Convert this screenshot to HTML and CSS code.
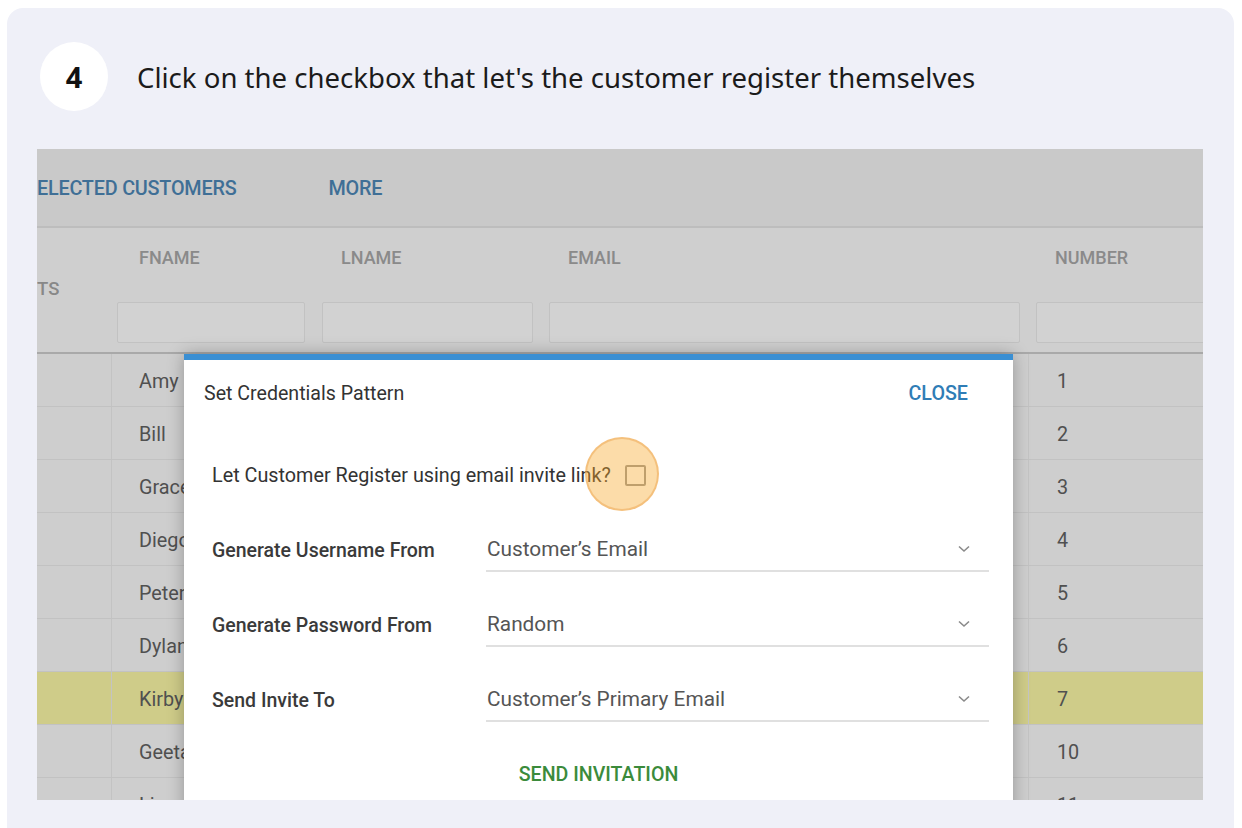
FILE: index.html
```html
<!DOCTYPE html>
<html>
<head>
<meta charset="utf-8">
<link rel="stylesheet" href="styles.css">
</head>
<body>
<div class="card">
  <div class="step">
    <div class="badge">4</div>
    <div class="title">Click on the checkbox that let's the customer register themselves</div>
  </div>
  <div class="shot">
    <div class="toolbar">
      <span class="tb-link">ELECTED CUSTOMERS</span>
      <span class="tb-link">MORE</span>
    </div>
    <div class="thead">
      <div class="hcell c0"><span class="ts">TS</span></div>
      <div class="hcell c1"><div class="hlabel">FNAME</div><div class="filter"></div></div>
      <div class="hcell c2"><div class="hlabel">LNAME</div><div class="filter"></div></div>
      <div class="hcell c3"><div class="hlabel">EMAIL</div><div class="filter"></div></div>
      <div class="hcell c4"><div class="hlabel">NUMBER</div><div class="filter"></div></div>
    </div>
    <div class="rows">
      <div class="row"><div class="cell c0"></div><div class="cell">Amy</div><div class="cell"></div><div class="cell"></div><div class="cell c4">1</div></div>
      <div class="row"><div class="cell c0"></div><div class="cell">Bill</div><div class="cell"></div><div class="cell"></div><div class="cell c4">2</div></div>
      <div class="row"><div class="cell c0"></div><div class="cell">Grace</div><div class="cell"></div><div class="cell"></div><div class="cell c4">3</div></div>
      <div class="row"><div class="cell c0"></div><div class="cell">Diego</div><div class="cell"></div><div class="cell"></div><div class="cell c4">4</div></div>
      <div class="row"><div class="cell c0"></div><div class="cell">Peter</div><div class="cell"></div><div class="cell"></div><div class="cell c4">5</div></div>
      <div class="row"><div class="cell c0"></div><div class="cell">Dylan</div><div class="cell"></div><div class="cell"></div><div class="cell c4">6</div></div>
      <div class="row hl"><div class="cell c0"></div><div class="cell">Kirby</div><div class="cell"></div><div class="cell"></div><div class="cell c4">7</div></div>
      <div class="row"><div class="cell c0"></div><div class="cell">Geeta</div><div class="cell"></div><div class="cell"></div><div class="cell c4">10</div></div>
      <div class="row"><div class="cell c0"></div><div class="cell">Lisa</div><div class="cell"></div><div class="cell"></div><div class="cell c4">11</div></div>
    </div>

    <div class="dialog">
      <div class="dlg-head">
        <span class="dlg-title">Set Credentials Pattern</span>
        <span class="dlg-close">CLOSE</span>
      </div>
      <div class="check-row">
        <span class="check-label">Let Customer Register using email invite link?</span>
        <span class="checkbox"></span>
      </div>
      <div class="form-row">
        <div class="f-label">Generate Username From</div>
        <div class="select"><span>Customer’s Email</span>
          <svg class="chev" width="12" height="8" viewBox="0 0 12 8"><polyline points="1,1.5 6,6 11,1.5" fill="none" stroke="#8a8a8a" stroke-width="1.6"/></svg>
        </div>
      </div>
      <div class="form-row">
        <div class="f-label">Generate Password From</div>
        <div class="select"><span>Random</span>
          <svg class="chev" width="12" height="8" viewBox="0 0 12 8"><polyline points="1,1.5 6,6 11,1.5" fill="none" stroke="#8a8a8a" stroke-width="1.6"/></svg>
        </div>
      </div>
      <div class="form-row">
        <div class="f-label">Send Invite To</div>
        <div class="select"><span>Customer’s Primary Email</span>
          <svg class="chev" width="12" height="8" viewBox="0 0 12 8"><polyline points="1,1.5 6,6 11,1.5" fill="none" stroke="#8a8a8a" stroke-width="1.6"/></svg>
        </div>
      </div>
      <div class="send">SEND INVITATION</div>
    </div>

    <div class="spot"></div>
  </div>
</div>
</body>
</html>
```

FILE: styles.css
```css
html, body {
  margin: 0;
  padding: 0;
  background: #ffffff;
  overflow: hidden;
  font-family: Roboto, "Liberation Sans", sans-serif;
}

.card {
  margin: 8px 8px 0 7px;
  height: 840px;
  box-sizing: border-box;
  background: #eff0f8;
  border-radius: 16px 16px 0 0;
  padding: 34px 31px 0 30px;
}

.step {
  display: flex;
  align-items: center;
  gap: 29px;
  padding-left: 3px;
}

.badge {
  width: 68px;
  height: 69px;
  border-radius: 50%;
  background: #ffffff;
  display: flex;
  align-items: center;
  justify-content: center;
  font-family: "Noto Sans", "Open Sans", sans-serif;
  font-weight: 700;
  font-size: 29px;
  color: #111;
}

.title {
  font-family: "Noto Sans", "Open Sans", sans-serif;
  font-size: 27.55px;
  color: #1b1b1b;
  padding-top: 2px;
}

.shot {
  position: relative;
  margin-top: 38px;
  width: 1166px;
  height: 651px;
  overflow: hidden;
  background: #cecece;
}

.toolbar {
  height: 77px;
  border-bottom: 2px solid #bdbdbd;
  background: #c9c9c9;
  display: flex;
  align-items: center;
  gap: 92px;
}

.tb-link {
  font-size: 19.8px;
  font-weight: 500;
  color: #3f6f96;
  letter-spacing: -0.2px;
  padding-top: 2px;
}

.thead, .row {
  display: grid;
  grid-template-columns: 75px 202px 227px 487px 1fr;
}

.thead {
  height: 124px;
  border-bottom: 2px solid #a9a9a9;
  background: #cfcfcf;
}

.hcell {
  padding-top: 20px;
}

.hcell.c0 {
  padding-top: 51px;
}

.ts {
  font-size: 18.5px;
  font-weight: 500;
  color: #888;
  line-height: 20px;
}

.hlabel {
  height: 20px;
  line-height: 20px;
  padding-left: 27px;
  font-size: 18px;
  font-weight: 500;
  color: #8a8a8a;
}

.filter {
  margin: 34px 8px 0 8px;
  height: 39px;
  border: 1px solid #c2c2c2;
  background: #d2d2d2;
  border-radius: 2px;
}

.hcell.c1 .filter {
  margin-left: 5px;
  margin-right: 9px;
}

.hcell.c4 .filter {
  margin-right: -10px;
}

.row {
  height: 52px;
  border-bottom: 1px solid #c2c2c2;
  background: #cecece;
}

.row.hl {
  background: #cfcc89;
}

.cell {
  display: flex;
  align-items: center;
  padding-left: 27px;
  padding-top: 2px;
  font-size: 19.8px;
  color: #505050;
}

.cell.c0 {
  border-right: 1px solid #c3c3c3;
}

.cell.c4 {
  border-left: 1px solid #c4c4c4;
  padding-left: 28px;
}

.dialog {
  position: absolute;
  left: 147px;
  top: 205px;
  width: 829px;
  height: 470px;
  background: #ffffff;
  border-top: 6px solid #3a8fd3;
  box-shadow: 0 0 16px rgba(0, 0, 0, 0.28);
  color: #333;
}

.dlg-head {
  height: 66px;
  display: flex;
  align-items: center;
  justify-content: space-between;
  padding: 0 45px 0 20px;
}

.dlg-title {
  font-size: 19.6px;
  color: #333;
}

.dlg-close {
  font-size: 19.7px;
  font-weight: 500;
  color: #2f7db6;
}

.check-row {
  margin-top: 30px;
  height: 38px;
  display: flex;
  align-items: center;
  gap: 14px;
  padding-left: 28px;
}

.check-label {
  font-size: 19.8px;
  color: #333;
}

.checkbox {
  width: 17px;
  height: 17px;
  border: 2px solid #9a9a9a;
  border-radius: 2px;
}

.form-row {
  margin-top: 25px;
  height: 50px;
  display: grid;
  grid-template-columns: 274px 503px;
  align-items: center;
  padding-left: 28px;
}

.check-row + .form-row {
  margin-top: 31px;
}

.f-label {
  font-size: 19.5px;
  font-weight: 500;
  color: #3a3a3a;
}

.select {
  height: 44px;
  border-bottom: 2px solid #e0e0e0;
  display: flex;
  align-items: center;
  justify-content: space-between;
  padding: 0 19px 0 1px;
  box-sizing: border-box;
  font-size: 20.8px;
  color: #555;
}

.chev {
  display: block;
}

.send {
  margin-top: 40px;
  text-align: center;
  line-height: 20px;
  font-size: 19.6px;
  font-weight: 500;
  color: #3b8b3b;
}

.spot {
  position: absolute;
  left: 548px;
  top: 288px;
  width: 70px;
  height: 70px;
  border-radius: 50%;
  background: rgba(247, 168, 40, 0.4);
  border: 2px solid rgba(236, 160, 70, 0.45);
}
```
